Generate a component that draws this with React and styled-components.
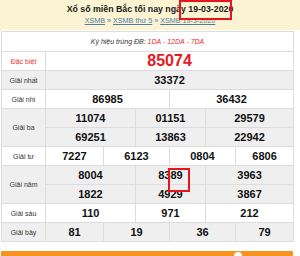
import styled, { createGlobalStyle } from "styled-components";

const GlobalStyle = createGlobalStyle`
  html, body {
    margin: 0;
    padding: 0;
    background: #fff;
    font-family: "Liberation Sans", Arial, sans-serif;
  }
`;

const Page = styled.div`
  width: 300px;
  height: 256px;
  overflow: hidden;
  position: relative;
  background: #fff;
  display: flex;
  flex-direction: column;
`;

// header strip with title and breadcrumb
const Header = styled.div`
  height: 30px;
  background: #fcf3d2;
  display: flex;
  flex-direction: column;
  align-items: center;
  padding-top: 4px;
  box-sizing: border-box;
  margin-bottom: 1px;
`;

const Title = styled.h1`
  margin: 0;
  font-size: 8.8px;
  line-height: 11px;
  font-weight: bold;
  color: #1a1a1a;
  white-space: nowrap;
`;

const Crumbs = styled.div`
  font-size: 7.2px;
  line-height: 11px;
  color: #4d7ba8;
  white-space: nowrap;

  a {
    color: #4d7ba8;
    text-decoration: underline;
  }
`;

const Table = styled.table`
  margin-left: 1px;
  width: 292px;
  border-collapse: collapse;
  table-layout: fixed;

  td {
    border: 1px solid #dcdcdc;
    padding: 0;
    text-align: center;
    height: 18px;
  }
`;

const Row = styled.tr`
  background: ${({ $gray }) => ($gray ? "#efefef" : "#fff")};
`;

const NoteCell = styled.td`
  && {
    height: 19px;
  }
  font-size: 7px;
  font-style: italic;
  color: #333;
`;

const Red = styled.span`
  color: #e52a2a;
`;

const Label = styled.td`
  font-size: 7px;
  color: ${({ $red }) => ($red ? "#e8323a" : "#333")};
`;

const Num = styled.td`
  font-size: ${({ $big }) => ($big ? "16px" : "11px")};
  font-weight: bold;
  color: ${({ $big }) => ($big ? "#e6191f" : "#111")};
`;

const Mark = styled.div`
  position: absolute;
  border: 2px solid #e8141c;
  box-sizing: border-box;
  pointer-events: none;
`;

const Footer = styled.div`
  position: absolute;
  left: 1px;
  right: 7px;
  bottom: 0;
  height: 5px;
  background: #f7941e;
`;

const Dot = styled.div`
  position: absolute;
  left: 233px;
  top: 1px;
  width: 8px;
  height: 8px;
  border-radius: 50%;
  background: #fff;
`;

const prizes = [
  { label: "Giải nhất", gray: true, rows: [[["33372", 6]]] },
  { label: "Giải nhì", rows: [[["86985", 3], ["36432", 3]]] },
  {
    label: "Giải ba",
    gray: true,
    rows: [
      [["11074", 2], ["01151", 2], ["29579", 2]],
      [["69251", 2], ["13863", 2], ["22942", 2]],
    ],
  },
  { label: "Giải tư", rows: [[["7227", 1], ["6123", 2], ["0804", 2], ["6806", 1]]] },
  {
    label: "Giải năm",
    gray: true,
    rows: [
      [["8004", 2], ["8389", 2], ["3963", 2]],
      [["1822", 2], ["4929", 2], ["3867", 2]],
    ],
  },
  { label: "Giải sáu", rows: [[["110", 2], ["971", 2], ["212", 2]]] },
  { label: "Giải bảy", gray: true, rows: [[["81", 1], ["19", 2], ["36", 2], ["79", 1]]] },
];

export default function App() {
  return (
    <Page>
      <GlobalStyle />
      <Header>
        <Title>Xổ số miền Bắc tối nay ngày 19-03-2020</Title>
        <Crumbs>
          <a>XSMB</a> » <a>XSMB thứ 5</a> » <a>XSMB 19-3-2020</a>
        </Crumbs>
      </Header>

      <Table>
        <colgroup>
          <col style={{ width: 44 }} />
          <col style={{ width: 58 }} />
          <col style={{ width: 32 }} />
          <col style={{ width: 34 }} />
          <col style={{ width: 36 }} />
          <col style={{ width: 30 }} />
          <col style={{ width: 58 }} />
        </colgroup>
        <tbody>
          <Row>
            <NoteCell colSpan={7}>
              Ký hiệu trúng ĐB: <Red>1DA - 12DA - 7DA</Red>
            </NoteCell>
          </Row>
          <Row>
            <Label $red>Đặc biệt</Label>
            <Num $big colSpan={6}>85074</Num>
          </Row>
          {prizes.map((p) =>
            p.rows.map((cells, i) => (
              <Row key={p.label + i} $gray={p.gray}>
                {i === 0 && <Label rowSpan={p.rows.length}>{p.label}</Label>}
                {cells.map(([n, span]) => (
                  <Num key={n} colSpan={span}>
                    {n}
                  </Num>
                ))}
              </Row>
            ))
          )}
        </tbody>
      </Table>

      <Mark style={{ left: 179, top: 0, width: 53, height: 20 }} />
      <Mark style={{ left: 168, top: 168, width: 22, height: 24 }} />

      <Footer>
        <Dot />
      </Footer>
    </Page>
  );
}
